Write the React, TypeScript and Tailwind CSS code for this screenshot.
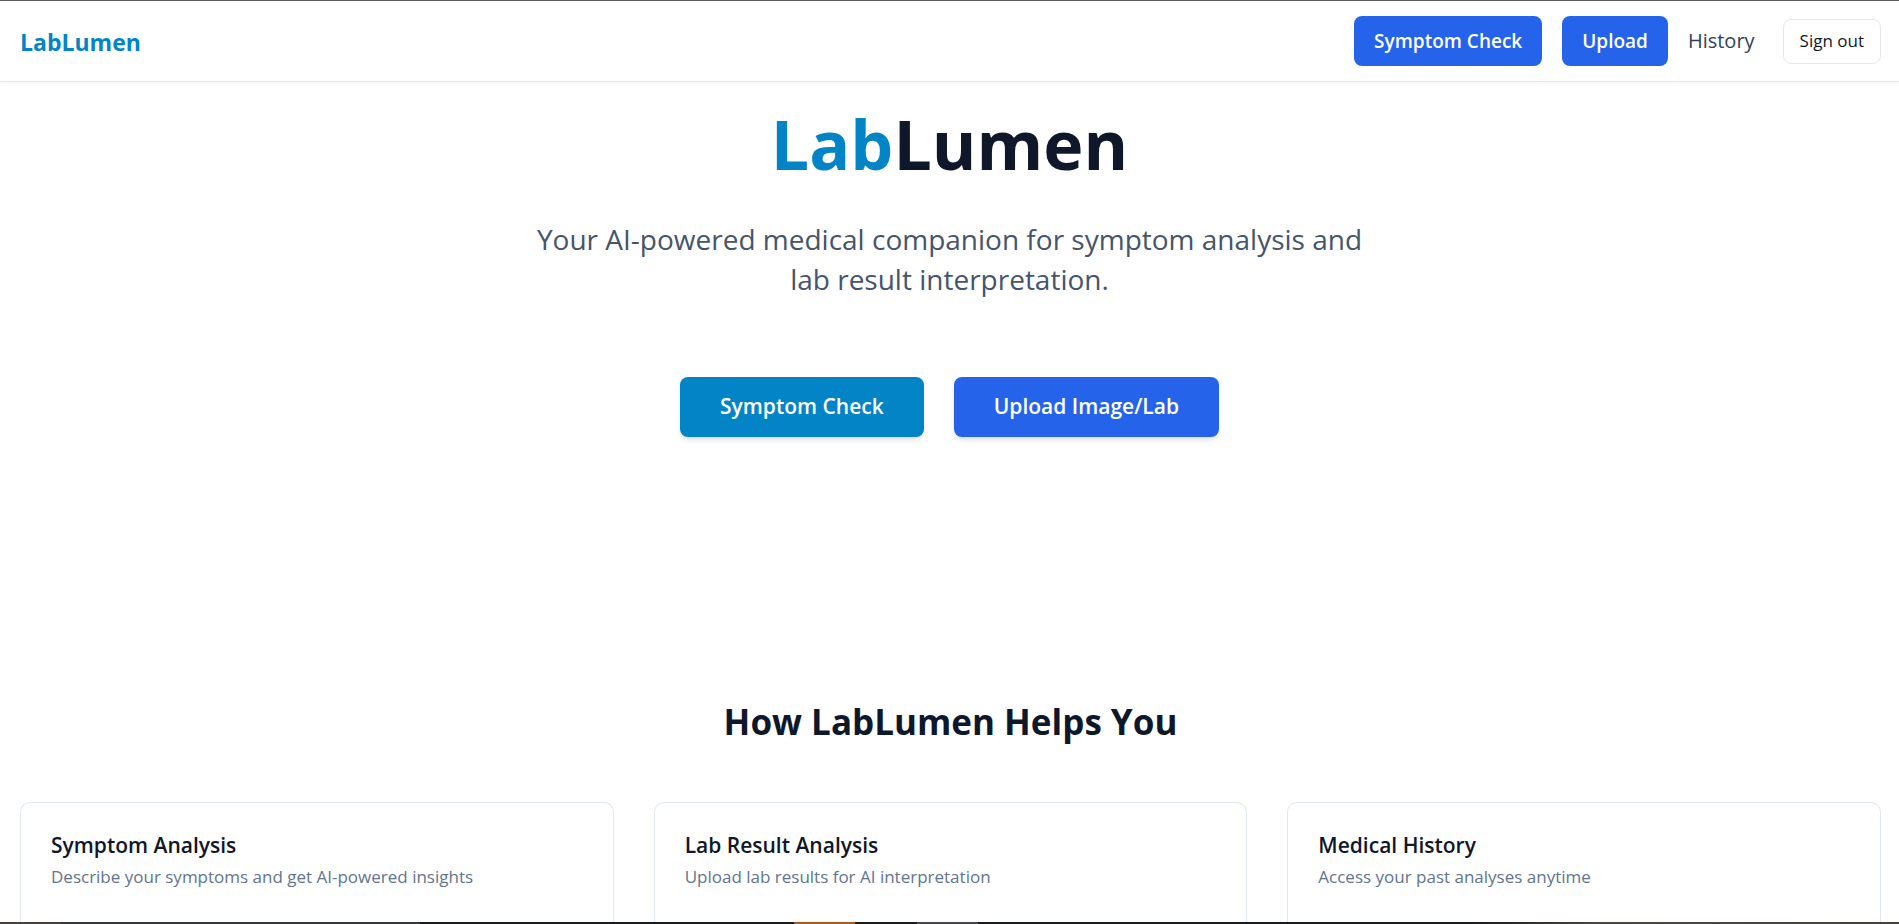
const features = [
  { title: 'Symptom Analysis', text: 'Describe your symptoms and get AI-powered insights' },
  { title: 'Lab Result Analysis', text: 'Upload lab results for AI interpretation' },
  { title: 'Medical History', text: 'Access your past analyses anytime' },
];

function Header() {
  return (
    <header className="flex h-[82px] items-center justify-between border-t border-b border-t-[#5f5d5e] border-b-gray-200 bg-white pr-[18px] pl-5 shadow-xs">
      <a href="#" className="pt-0.5 text-[23px] font-bold text-[#0284c7]">LabLumen</a>
      <nav className="flex items-center gap-5">
        <a href="#symptoms" className="flex h-[50px] items-center rounded-lg bg-[#2563eb] px-5 text-[19px] font-semibold text-white">Symptom Check</a>
        <a href="#upload" className="flex h-[50px] items-center rounded-lg bg-[#2563eb] px-5 text-[19px] font-semibold text-white">Upload</a>
        <a href="#history" className="mr-2 text-[20px] font-medium text-slate-700">History</a>
        <button type="button" className="h-[45px] rounded-lg border border-gray-200 px-4 text-[17px] font-medium text-slate-900">Sign out</button>
      </nav>
    </header>
  );
}

function Hero() {
  return (
    <section className="flex flex-col items-center pt-6 text-center">
      <h1 className="text-[68px] leading-[75px] font-bold text-slate-900">
        <span className="text-[#0284c7]">Lab</span>Lumen
      </h1>
      <p className="mt-[38px] max-w-[860px] text-[28px] leading-10 text-slate-600">
        Your AI-powered medical companion for symptom analysis and lab result interpretation.
      </p>
      <div className="mt-[78px] flex gap-[30px]">
        <button type="button" className="h-[60px] rounded-lg bg-[#0284c7] px-10 text-[21px] font-semibold text-white shadow-md">Symptom Check</button>
        <button type="button" className="h-[60px] rounded-lg bg-[#2563eb] px-10 text-[21px] font-semibold text-white shadow-md">Upload Image/Lab</button>
      </div>
    </section>
  );
}

function Features() {
  return (
    <section className="mt-[260px] flex flex-1 flex-col pr-[18px] pl-5">
      <h2 className="text-center text-[35px] leading-[50px] font-bold text-slate-900">How LabLumen Helps You</h2>
      <div className="mt-[55px] grid flex-1 grid-cols-3 gap-10">
        {features.map((f) => (
          <article key={f.title} className="rounded-t-[10px] border border-b-0 border-slate-200 px-[30px] pt-7">
            <h3 className="text-[21px] leading-7 font-semibold text-slate-900">{f.title}</h3>
            <p className="mt-1.5 text-[17px] leading-6 text-slate-500">{f.text}</p>
          </article>
        ))}
      </div>
    </section>
  );
}

function BottomStrip() {
  return (
    <div className="flex h-0.5 bg-[#1b1c1f]">
      <div className="w-[3.2%] bg-[#48423f]" />
      <div className="w-[18.9%] bg-[#36383c]" />
      <div className="w-[19.7%]" />
      <div className="w-[3.2%] bg-[#a85c22]" />
      <div className="w-[3.3%]" />
      <div className="w-[3.2%] bg-[#48484b]" />
      <div className="w-[26%]" />
      <div className="flex-1 bg-linear-to-r from-[#1b1c1f] via-[#4b483f] via-30% to-[#45413d]" />
    </div>
  );
}

export default function App() {
  return (
    <div className="flex min-h-screen flex-col bg-white font-['Open_Sans',sans-serif]">
      <Header />
      <main className="flex flex-1 flex-col">
        <Hero />
        <Features />
      </main>
      <BottomStrip />
    </div>
  );
}
